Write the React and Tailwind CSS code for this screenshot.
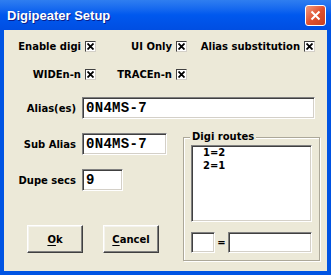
const sunken =
  "bg-white border border-t-[#808080] border-l-[#808080] border-r-white border-b-white shadow-[inset_1px_1px_0_#404040,inset_-1px_-1px_0_#d4d0c8]";
const raised =
  "bg-[#ece9d8] border border-t-white border-l-white border-r-[#404040] border-b-[#404040] shadow-[inset_-1px_-1px_0_#808080,inset_1px_1px_0_#f4f3ee]";

function Check() {
  return (
    <span className="flex h-[11px] w-[11px] items-center justify-center border border-t-[#404040] border-l-[#404040] border-r-[#d4d0c8] border-b-[#d4d0c8] bg-white">
      <svg width="7" height="7" viewBox="0 0 7 7">
        <path d="M0.5 0.5 L6.5 6.5 M6.5 0.5 L0.5 6.5" stroke="#000" strokeWidth="1.8" />
      </svg>
    </span>
  );
}

function CheckItem({ label, width }) {
  return (
    <div className={`flex items-center justify-end gap-[4px] ${width}`}>
      <span>{label}</span>
      <Check />
    </div>
  );
}

function Field({ label, width, value }) {
  return (
    <div className="flex h-[22px] items-center">
      <span className="w-[72px] text-right">{label}</span>
      <div
        className={`ml-[6px] flex h-full items-center pl-[3px] ${sunken} ${width} font-['Liberation_Mono',monospace] text-[14px] font-bold tracking-[0.3px]`}
      >
        {value}
      </div>
    </div>
  );
}

export default function App() {
  return (
    <div className="flex h-[275px] w-[331px] flex-col bg-[#0054e3] font-['DejaVu_Sans',sans-serif] text-[10px] font-bold text-black">
      <div className="flex h-[30px] items-center justify-between bg-linear-to-b from-[#2f7ef0] via-[#0058ee] to-[#004ee2] pl-[7px] pr-[5px]">
        <span className="pt-[1px] font-['Liberation_Sans',sans-serif] text-[13px] text-white [text-shadow:1px_1px_0_#0a1e8c]">
          Digipeater Setup
        </span>
        <span className="flex h-[21px] w-[21px] items-center justify-center rounded-[3px] border border-white bg-linear-to-br from-[#ef9a80] via-[#e0512f] to-[#c8401e]">
          <svg width="11" height="11" viewBox="0 0 11 11">
            <path d="M1.5 1.5 L9.5 9.5 M9.5 1.5 L1.5 9.5" stroke="#fff" strokeWidth="2" />
          </svg>
        </span>
      </div>

      <div className="mx-[4px] mb-[4px] flex flex-1 flex-col bg-[#ece9d8]">
        <div className="mt-[6px] flex h-[20px] items-center">
          <CheckItem label="Enable digi" width="w-[92px]" />
          <CheckItem label="UI Only" width="w-[91px]" />
          <CheckItem label="Alias substitution" width="w-[128px]" />
        </div>
        <div className="mt-[8px] flex h-[20px] items-center">
          <CheckItem label="WIDEn-n" width="w-[92px]" />
          <CheckItem label="TRACEn-n" width="w-[91px]" />
        </div>

        <div className="mt-[13px]">
          <Field label="Alias(es)" width="w-[233px]" value="0N4MS-7" />
        </div>

        <div className="mt-[12px] flex">
          <div className="flex w-[179px] flex-col">
            <div className="mt-[2px]">
              <Field label="Sub Alias" width="w-[85px]" value="0N4MS-7" />
            </div>
            <div className="mt-[14px]">
              <Field label="Dupe secs" width="w-[41px]" value="9" />
            </div>
            <div className="mt-[34px] ml-[23px] flex gap-[20px]">
              <button className={`h-[28px] w-[56px] ${raised}`}>
                <span className="underline underline-offset-2">O</span>k
              </button>
              <button className={`h-[28px] w-[56px] ${raised}`}>
                <span className="underline underline-offset-2">C</span>ancel
              </button>
            </div>
          </div>

          <div className="relative mt-[6px] w-[137px] border border-[#aca899] px-[7px] pt-[7px] pb-[7px] shadow-[inset_1px_1px_0_#fff,1px_1px_0_#fff]">
            <span className="absolute -top-[7px] left-[6px] bg-[#ece9d8] px-[2px] leading-[12px]">
              Digi routes
            </span>
            <div className={`h-[77px] pl-[11px] leading-[13px] ${sunken}`}>
              <div>1=2</div>
              <div>2=1</div>
            </div>
            <div className="mt-[10px] flex h-[21px] items-center">
              <div className={`h-full w-[24px] ${sunken}`} />
              <span className="w-[13px] text-center">=</span>
              <div className={`h-full flex-1 ${sunken}`} />
            </div>
          </div>
        </div>
      </div>
    </div>
  );
}
